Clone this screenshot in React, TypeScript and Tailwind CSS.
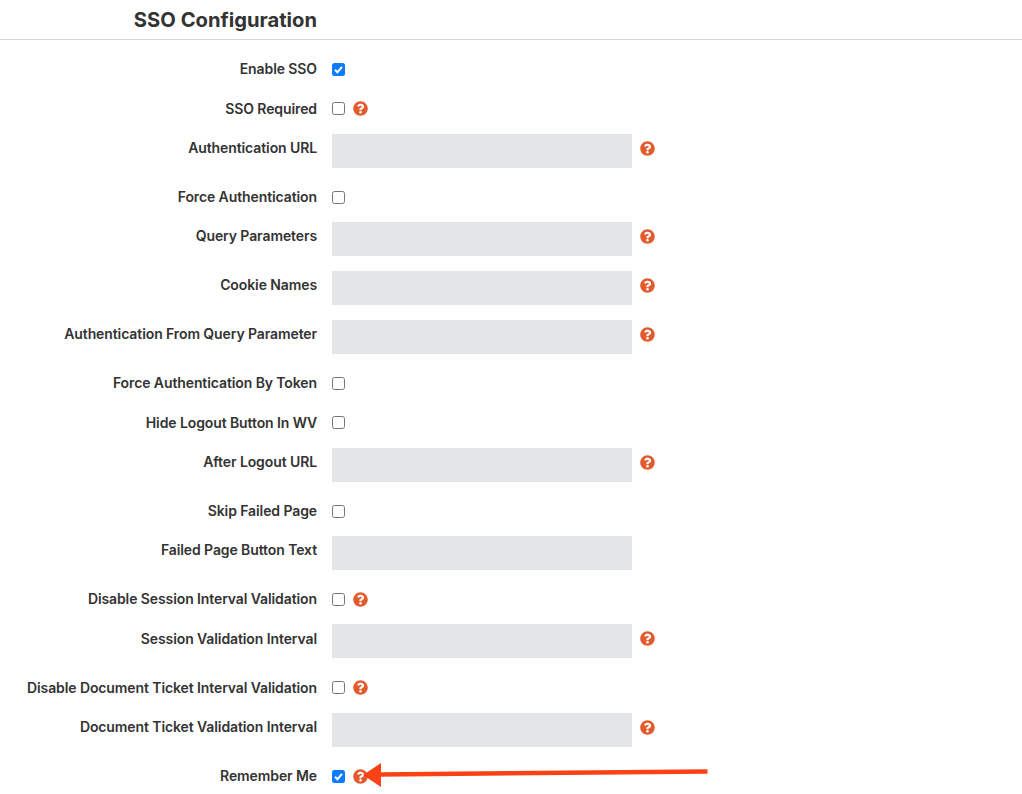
import { FaQuestionCircle } from "react-icons/fa";

type Field = {
  label: string;
  type: "check" | "text";
  checked?: boolean;
  help?: boolean;
};

const fields: Field[] = [
  { label: "Enable SSO", type: "check", checked: true },
  { label: "SSO Required", type: "check", help: true },
  { label: "Authentication URL", type: "text", help: true },
  { label: "Force Authentication", type: "check" },
  { label: "Query Parameters", type: "text", help: true },
  { label: "Cookie Names", type: "text", help: true },
  { label: "Authentication From Query Parameter", type: "text", help: true },
  { label: "Force Authentication By Token", type: "check" },
  { label: "Hide Logout Button In WV", type: "check" },
  { label: "After Logout URL", type: "text", help: true },
  { label: "Skip Failed Page", type: "check" },
  { label: "Failed Page Button Text", type: "text" },
  { label: "Disable Session Interval Validation", type: "check", help: true },
  { label: "Session Validation Interval", type: "text", help: true },
  { label: "Disable Document Ticket Interval Validation", type: "check", help: true },
  { label: "Document Ticket Validation Interval", type: "text", help: true },
  { label: "Remember Me", type: "check", checked: true, help: true },
];

function Checkbox({ checked }: { checked?: boolean }) {
  if (checked) {
    return (
      <span className="flex h-[13px] w-[13px] shrink-0 items-center justify-center rounded-[2.5px] bg-[#0b7bff]">
        <svg viewBox="0 0 13 13" className="h-[13px] w-[13px]" fill="none">
          <path d="M3 6.8 5.4 9.3 10 3.8" stroke="#fff" strokeWidth="2" />
        </svg>
      </span>
    );
  }
  return <span className="h-[13px] w-[13px] shrink-0 rounded-[2.5px] border border-[#767676] bg-white" />;
}

function Row({ field }: { field: Field }) {
  return (
    <div className="flex gap-[15px]">
      <label className="h-[24.35px] w-[317px] shrink-0 pt-[4.3px] text-right text-[14px] leading-5 font-semibold tracking-[-0.1px] text-[#333]">
        {field.label}
      </label>
      {field.type === "check" ? (
        <div className="flex h-[24.35px] items-start gap-2 pt-[8px]">
          <Checkbox checked={field.checked} />
          {field.help && <FaQuestionCircle className="-mt-[1px] h-[15px] w-[15px] text-[#e35b2d]" />}
        </div>
      ) : (
        <div className="flex items-start gap-2">
          <div className="h-[34px] w-[300px] bg-[#e4e5e7]" />
          {field.help && <FaQuestionCircle className="mt-[7px] h-[15px] w-[15px] text-[#e35b2d]" />}
        </div>
      )}
    </div>
  );
}

export default function App() {
  return (
    <div className="relative h-[794px] w-[1022px] overflow-hidden bg-white font-['Inter',sans-serif]">
      <div className="flex h-10 items-center justify-end border-b border-[#d5d5d5] pt-0.5 pr-[705px]">
        <h1 className="text-[20.2px] font-bold whitespace-nowrap text-[#333]">SSO Configuration</h1>
      </div>
      <div className="flex flex-col gap-[15px] pt-[15px]">
        {fields.map((f) => (
          <Row key={f.label} field={f} />
        ))}
      </div>
      {/* red annotation arrow */}
      <svg className="absolute top-[755px] left-[350px] h-[39px] w-[365px]" viewBox="0 0 365 39" fill="none">
        <path d="M30 19.5 357.500 16.500" stroke="#fb4216" strokeWidth="4.5" />
        <path d="M13 20 31 8 31 32Z" fill="#fb4216" />
      </svg>
    </div>
  );
}
